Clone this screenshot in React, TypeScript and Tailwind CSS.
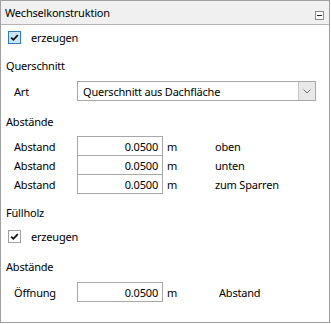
import React from 'react';

const font = { fontFamily: '"Noto Sans", "Open Sans", sans-serif', letterSpacing: '-0.2px' };

const Check: React.FC<{ active?: boolean }> = ({ active }) => (
  <div
    className={`w-[13px] h-[13px] border flex items-center justify-center shrink-0 ${
      active ? 'border-[#2d7cc4] bg-[#cce4f7]' : 'border-[#a0a0a0] bg-white'
    }`}
  >
    <svg width="11" height="11" viewBox="0 0 11 11">
      <path d="M2.2 5.6 L4.4 7.8 L8.8 3.2" fill="none" stroke="#111" strokeWidth="1.8" />
    </svg>
  </div>
);

const Heading: React.FC<{ text: string; className?: string }> = ({ text, className }) => (
  <div className={`h-[20px] flex items-center pl-[5px] ${className ?? ''}`}>{text}</div>
);

const NumRow: React.FC<{ label: string; note: string; unitW: string; className?: string }> = ({
  label,
  note,
  unitW,
  className,
}) => (
  <div className={`flex items-center h-[20px] ${className ?? ''}`}>
    <div className="w-[76px] pl-[13px]">{label}</div>
    <div className="w-[86px] h-[20px] border border-[#a8a8a8] flex items-center justify-end pr-[4px] bg-white">
      0.0500
    </div>
    <div className={`${unitW} pl-[4px]`}>m</div>
    <div>{note}</div>
  </div>
);

const App: React.FC = () => {
  return (
    <div className="w-[331px] h-[324px] bg-white text-[11px] text-black leading-none" style={font}>
      <div className="w-[330px] h-[323px] border border-[#a0a0a0] flex flex-col">
        {/* header */}
        <div className="h-[24px] bg-[#f0f0f0] border-b border-[#b4b4b4] flex items-center justify-between pl-[4px] pr-[5px]">
          <span className="pb-[1px]">Wechselkonstruktion</span>
          <div className="w-[9px] h-[9px] border border-[#8a8a8a] bg-white flex items-center justify-center mt-[6px]">
            <div className="w-[5px] h-[1px] bg-[#222]" />
          </div>
        </div>

        <div className="flex items-center mt-[6px] pl-[7px] h-[13px]">
          <Check active />
          <span className="pl-[10px]">erzeugen</span>
        </div>

        <Heading text="Querschnitt" className="mt-[11px]" />

        <div className="flex items-center h-[20px] mt-[6px]">
          <div className="w-[76px] pl-[13px]">Art</div>
          <div className="w-[239px] h-[20px] border border-[#a8a8a8] flex bg-white">
            <div className="flex-1 flex items-center pl-[5px]">Querschnitt aus Dachfläche</div>
            <div className="w-[17px] border-l border-[#c4c4c4] bg-[#e8e8e8] flex items-center justify-center">
              <svg width="8" height="5" viewBox="0 0 8 5">
                <path d="M0.5 0.5 L4 4 L7.5 0.5" fill="none" stroke="#707070" strokeWidth="1" />
              </svg>
            </div>
          </div>
        </div>

        <Heading text="Abstände" className="mt-[10px]" />

        <NumRow label="Abstand" note="oben" unitW="w-[52px]" className="mt-[5px]" />
        <NumRow label="Abstand" note="unten" unitW="w-[52px]" className="-mt-[1px]" />
        <NumRow label="Abstand" note="zum Sparren" unitW="w-[52px]" className="-mt-[1px]" />

        <Heading text="Füllholz" className="mt-[8px]" />

        <div className="flex items-center mt-[8px] pl-[7px] h-[13px]">
          <Check />
          <span className="pl-[10px]">erzeugen</span>
        </div>

        <Heading text="Abstände" className="mt-[13px]" />

        <NumRow label="Öffnung" note="Abstand" unitW="w-[56px]" className="mt-[6px]" />
      </div>
    </div>
  );
};

export default App;
